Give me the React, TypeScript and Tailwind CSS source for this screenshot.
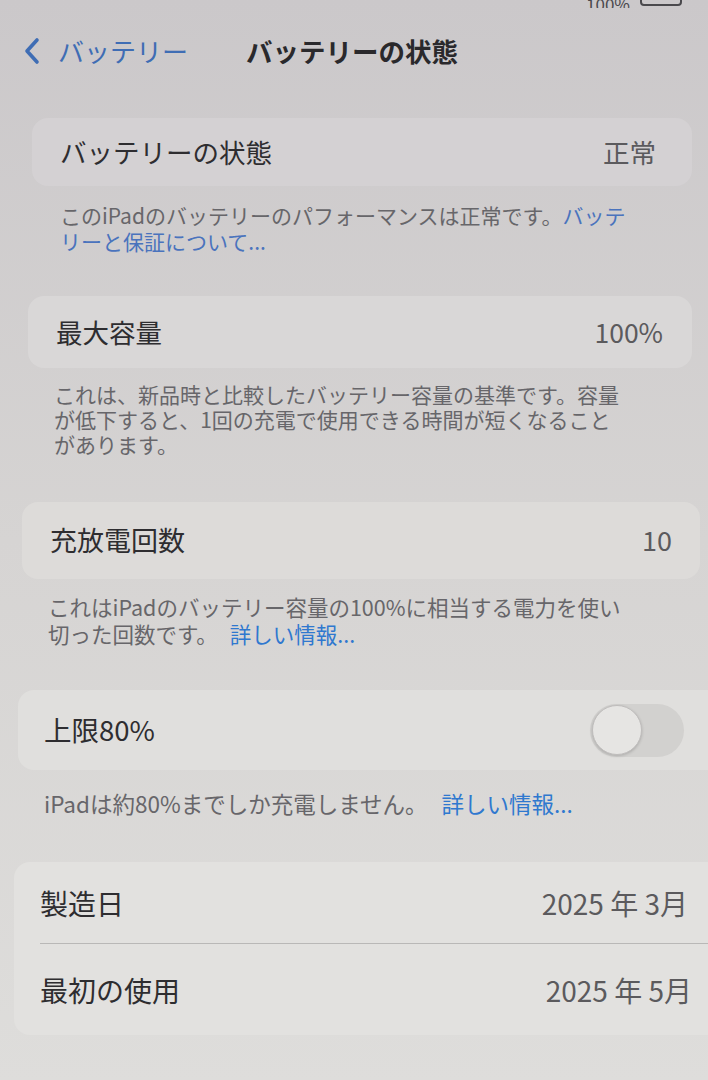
import React from "react";

/** --- chevron do botão voltar --- */
const BackChevron: React.FC = () => (
  <svg width="20" height="28" viewBox="0 0 20 28" fill="none">
    <path
      d="M15 3 L5 14 L15 25"
      stroke="#3f6db4"
      strokeWidth="3.6"
      strokeLinecap="round"
      strokeLinejoin="round"
    />
  </svg>
);

/** --- switch desligado --- */
const Toggle: React.FC = () => (
  <div className="flex h-[53px] w-[94px] items-center rounded-full bg-[#d2d1cf] pl-[2px]">
    <div className="h-[50px] w-[50px] rounded-full border border-[#bfbdbc] bg-[#e6e5e3] shadow-[0_1px_3px_rgba(0,0,0,0.18)]" />
  </div>
);

export default function App() {
  return (
    <div className="min-h-[1080px] w-[708px] overflow-hidden bg-linear-to-b from-[#cbc8ca] via-[#d6d4d3] to-[#dedddb] font-[Noto_Sans_CJK_JP,Noto_Sans,sans-serif] text-[#2e2d30]">
      {/* status bar (cortada) */}
      <div className="flex h-[8px] items-end justify-end gap-[10px] overflow-hidden pr-[26px]">
        <span className="mb-[-4px] text-[17px] leading-[17px] text-[#4a494d]">100%</span>
        <div className="mb-[2px] h-[12px] w-[42px] rounded-[4px] border-2 border-[#4a494d]" />
      </div>

      {/* nav */}
      <div className="mt-[28px] flex h-[30px] items-center pl-[22px]">
        <BackChevron />
        <span className="ml-[16px] text-[26px] leading-[30px] text-[#3f6db4]">バッテリー</span>
        <span className="ml-[58px] text-[26.5px] font-bold leading-[30px] text-[#2a292c]">
          バッテリーの状態
        </span>
      </div>

      {/* バッテリーの状態 */}
      <div className="ml-[32px] mr-[16px] mt-[52px] flex h-[68px] items-center justify-between rounded-[16px] bg-[#d4d1d3] pl-[28px] pr-[36px] text-[26.5px]">
        <span>バッテリーの状態</span>
        <span className="text-[#5b5a5d]">正常</span>
      </div>
      <p className="ml-[60px] mr-[70px] mt-[16px] text-[21px] leading-[26px] text-[#67666a]">
        このiPadのバッテリーのパフォーマンスは正常です。
        <span className="text-[#4a73bd]">バッテリーと保証について...</span>
      </p>

      {/* 最大容量 */}
      <div className="ml-[28px] mr-[16px] mt-[42px] flex h-[72px] items-center justify-between rounded-[16px] bg-[#d9d7d7] pl-[28px] pr-[29px] text-[26.5px]">
        <span>最大容量</span>
        <span className="text-[#5b5a5d]">100%</span>
      </div>
      <p className="ml-[54px] mr-[60px] mt-[14px] text-[21px] leading-[25px] text-[#67666a]">
        これは、新品時と比較したバッテリー容量の基準です。容量
        <br />
        が低下すると、1回の充電で使用できる時間が短くなること
        <br />
        があります。
      </p>

      {/* 充放電回数 */}
      <div className="ml-[22px] mr-[8px] mt-[45px] flex h-[77px] items-center justify-between rounded-[16px] bg-[#dddbd9] pl-[28px] pr-[28px] text-[27px]">
        <span>充放電回数</span>
        <span className="text-[#5b5a5d]">10</span>
      </div>
      <p className="ml-[48px] mr-[40px] mt-[14px] text-[21.5px] leading-[27px] text-[#67666a]">
        これはiPadのバッテリー容量の100%に相当する電力を使い
        <br />
        切った回数です。
        <span className="ml-[12px] text-[#2f78cf]">詳しい情報...</span>
      </p>

      {/* 上限80% */}
      <div className="ml-[18px] mt-[43px] flex h-[80px] items-center justify-between rounded-l-[16px] bg-[#e0dfdd] pl-[26px] pr-[24px] text-[27.5px]">
        <span>上限80%</span>
        <Toggle />
      </div>
      <p className="ml-[44px] mt-[20px] text-[22.5px] leading-[26px] text-[#67666a]">
        iPadは約80%までしか充電しません。
        <span className="ml-[14px] text-[#2f78cf]">詳しい情報...</span>
      </p>

      {/* 製造日 / 最初の使用 */}
      <div className="ml-[14px] mt-[46px] rounded-l-[16px] bg-[#e2e1df] text-[28px]">
        <div className="flex h-[81px] items-center justify-between pl-[26px] pr-[20px]">
          <span>製造日</span>
          <span className="text-[#5b5a5d]">2025 年 3月</span>
        </div>
        <div className="ml-[26px] h-px bg-[#b9b8b7]" />
        <div className="flex h-[91px] items-center justify-between pl-[26px] pr-[16px]">
          <span>最初の使用</span>
          <span className="text-[#5b5a5d]">2025 年 5月</span>
        </div>
      </div>
    </div>
  );
}
